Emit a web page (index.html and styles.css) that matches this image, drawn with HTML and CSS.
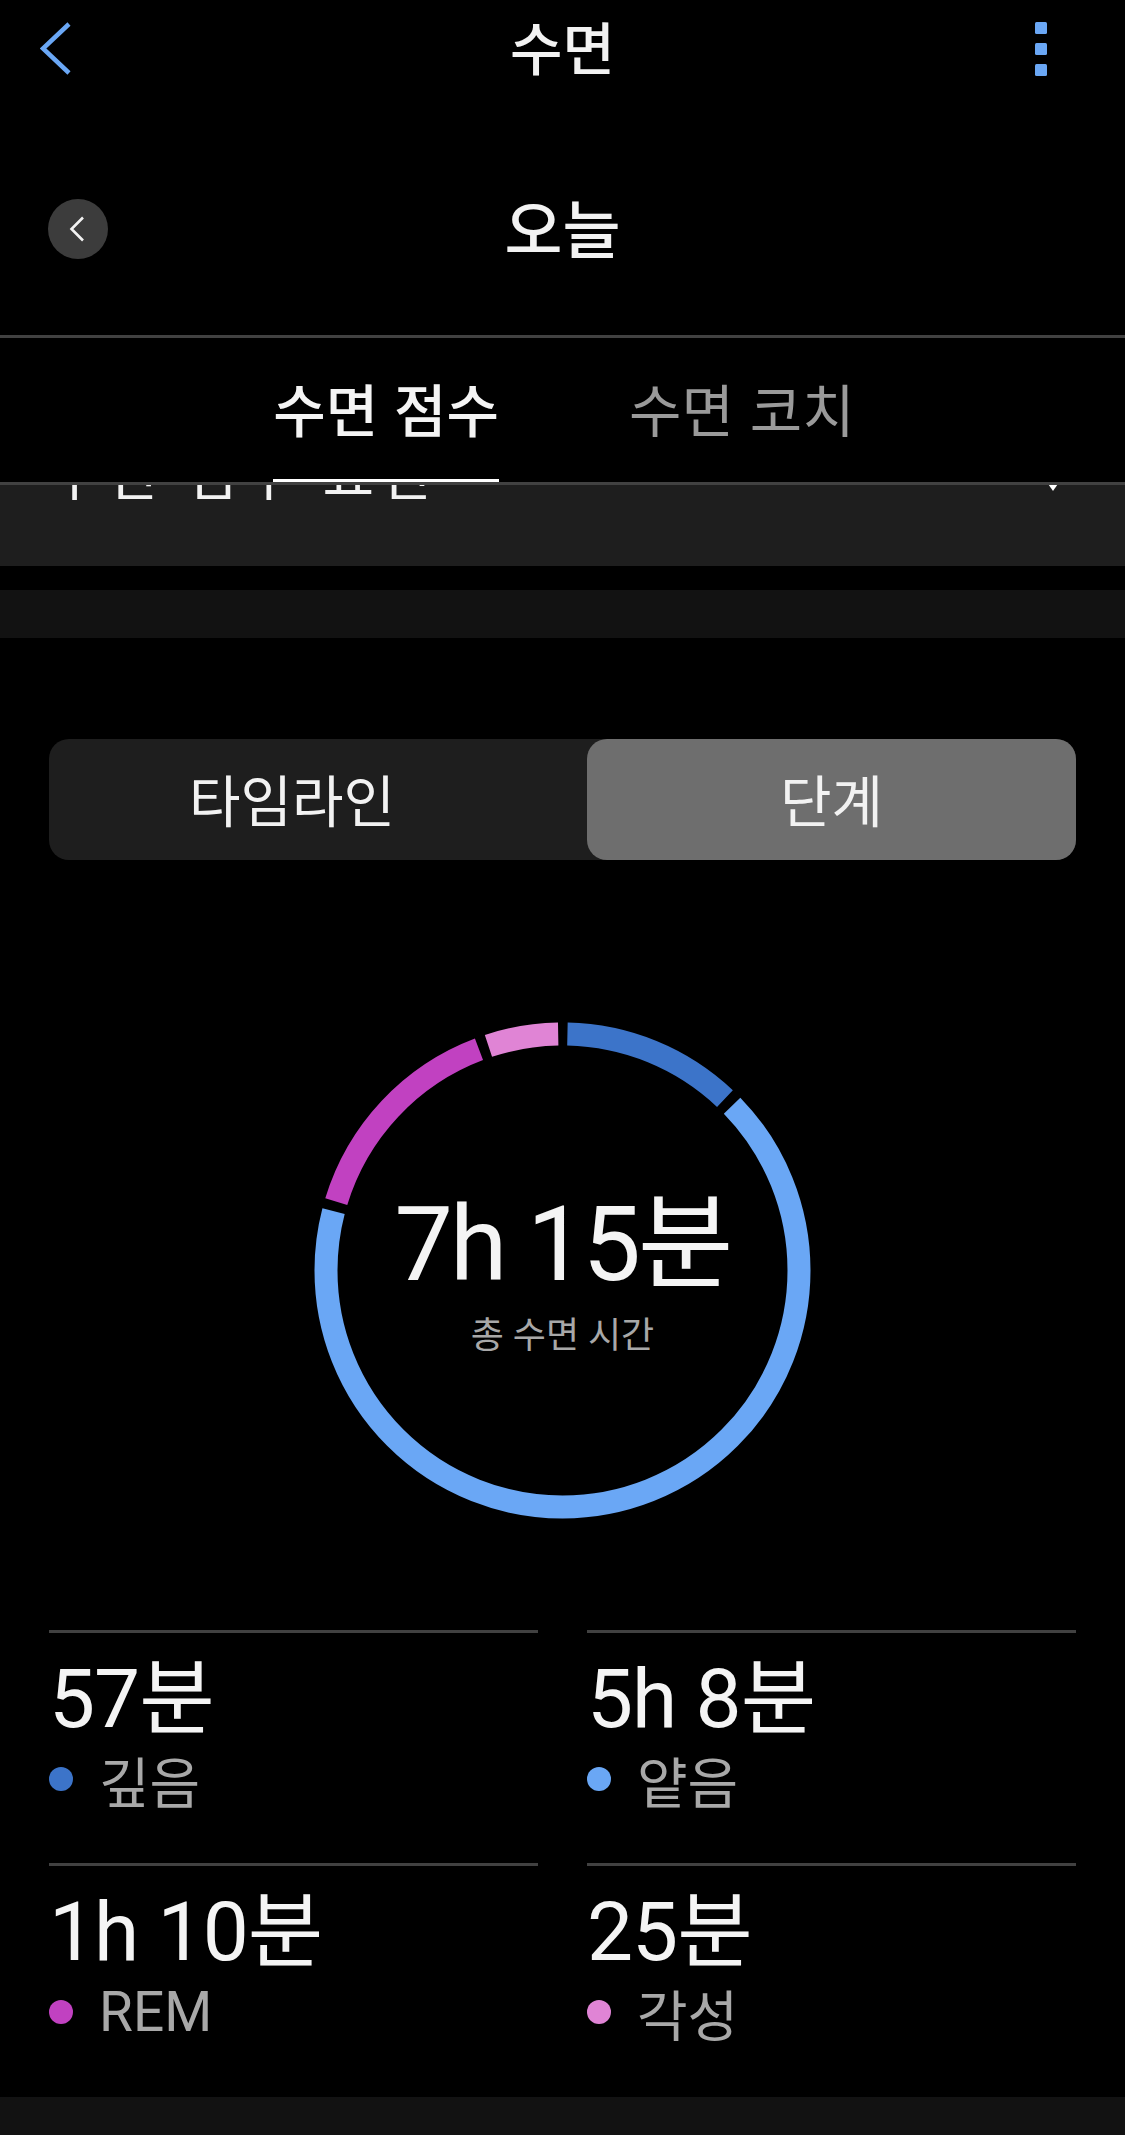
FILE: index.html
```html
<!DOCTYPE html>
<html lang="ko">
<head>
    <meta charset="UTF-8">
    <meta name="viewport" content="width=device-width, initial-scale=1.0">
    <title>수면</title>
    <link rel="stylesheet" href="styles.css">
</head>
<body>

    <!-- Top bar -->
    <header class="topbar">
        <div class="topbar-left">
            <svg class="back-icon" width="32" height="54" viewBox="0 0 32 54">
                <polyline points="29,2 3,26.5 29,51" fill="none" stroke="#6aa7f5" stroke-width="4.5"/>
            </svg>
        </div>
        <h1 class="title">수면</h1>
        <div class="topbar-right">
            <svg class="more-icon" width="12" height="54" viewBox="0 0 12 54">
                <rect x="0" y="0" width="12" height="12" rx="1.5" fill="#6aa7f5"/>
                <rect x="0" y="21" width="12" height="12" rx="1.5" fill="#6aa7f5"/>
                <rect x="0" y="42" width="12" height="12" rx="1.5" fill="#6aa7f5"/>
            </svg>
        </div>
    </header>

    <!-- Date selector -->
    <div class="datebar">
        <div class="datebar-left">
            <div class="prev-day">
                <svg width="16" height="26" viewBox="0 0 16 26">
                    <polyline points="14,1.5 2.5,13 14,24.5" fill="none" stroke="#f2f2f2" stroke-width="2.6"/>
                </svg>
            </div>
        </div>
        <div class="date">오늘</div>
        <div></div>
    </div>

    <!-- Tabs -->
    <nav class="tabs">
        <div class="tab active">수면 점수</div>
        <div class="tab">수면 코치</div>
    </nav>

    <!-- Collapsed card under the sticky header -->
    <div class="factors">
        <div class="factors-row">
            <span>수면 점수 요인</span>
            <span class="caret"></span>
        </div>
    </div>
    <div class="strip"></div>

    <!-- Timeline / stages switch -->
    <div class="switch">
        <div class="switch-item">타임라인</div>
        <div class="switch-item selected">단계</div>
    </div>

    <!-- Stages ring -->
    <div class="ring">
        <svg width="497" height="497" viewBox="0 0 497 497">
            <g transform="rotate(-90 248.5 248.5)" fill="none" stroke-width="23">
                <!-- circumference 1486, gaps of 10 -->
                <circle cx="248.5" cy="248.5" r="236.5" stroke="#3c74c9" stroke-dasharray="174 1486" stroke-dashoffset="-5"/>
                <circle cx="248.5" cy="248.5" r="236.5" stroke="#6aa7f5" stroke-dasharray="985 1486" stroke-dashoffset="-189"/>
                <circle cx="248.5" cy="248.5" r="236.5" stroke="#c141c1" stroke-dasharray="216 1486" stroke-dashoffset="-1184"/>
                <circle cx="248.5" cy="248.5" r="236.5" stroke="#e084d5" stroke-dasharray="71 1486" stroke-dashoffset="-1410"/>
            </g>
        </svg>
        <div class="ring-label">
            <div class="total">7h 15분</div>
            <div class="total-caption">총 수면 시간</div>
        </div>
    </div>

    <!-- Stage totals -->
    <div class="stats">
        <div class="stat">
            <div class="stat-value">57분</div>
            <div class="stat-label"><span class="dot deep"></span>깊음</div>
        </div>
        <div class="stat">
            <div class="stat-value">5h 8분</div>
            <div class="stat-label"><span class="dot light"></span>얕음</div>
        </div>
        <div class="stat">
            <div class="stat-value">1h 10분</div>
            <div class="stat-label"><span class="dot rem"></span>REM</div>
        </div>
        <div class="stat">
            <div class="stat-value">25분</div>
            <div class="stat-label"><span class="dot awake"></span>각성</div>
        </div>
    </div>

    <div class="footer-strip"></div>

</body>
</html>
```
FILE: styles.css
```css
/* Page */
body {
    margin: 0;
    background-color: #000;
    color: #f2f2f2;
    font-family: Roboto, "Noto Sans CJK KR", sans-serif;
    overflow: hidden;
}

/* Top bar */
.topbar {
    display: grid;
    grid-template-columns: 1fr auto 1fr;
    align-items: center;
    height: 97px;
}

.topbar-left {
    padding-left: 40px;
    display: flex;
}

.topbar-right {
    display: flex;
    justify-content: flex-end;
    padding-right: 78px;
}

.title {
    margin: -7px 0 0;
    font-family: "Noto Sans CJK KR", sans-serif;
    font-size: 57px;
    font-weight: 500;
    line-height: 70px;
}

/* Date selector */
.datebar {
    display: grid;
    grid-template-columns: 1fr auto 1fr;
    align-items: center;
    height: 60px;
    padding: 100px 0 78px;
}

.datebar-left {
    padding-left: 48px;
}

.prev-day {
    width: 60px;
    height: 60px;
    border-radius: 50%;
    background-color: #3c3c3c;
    display: flex;
    align-items: center;
    justify-content: center;
}

.prev-day svg {
    margin-left: -2px;
}

.date {
    margin-top: -6px;
    font-family: "Noto Sans CJK KR", sans-serif;
    font-size: 63px;
    font-weight: 500;
    line-height: 70px;
}

/* Tabs */
.tabs {
    display: flex;
    justify-content: center;
    gap: 130px;
    height: 144px;
    border-top: 3px solid #414141;
    border-bottom: 3px solid #414141;
    padding-left: 3px;
}

.tab {
    display: flex;
    align-items: center;
    padding-bottom: 4px;
    font-family: "Noto Sans CJK KR", sans-serif;
    font-size: 57px;
    color: #9a9a9a;
    border-bottom: 3px solid transparent;
}

.tab.active {
    color: #f4f4f4;
    font-weight: 500;
    border-bottom-color: #fff;
}

/* Card that slid under the header */
.factors {
    height: 81px;
    background-color: #1e1e1e;
    overflow: hidden;
}

.factors-row {
    display: flex;
    justify-content: space-between;
    margin-top: -44px;
    padding: 0 65px 0 49px;
    font-family: "Noto Sans CJK KR", sans-serif;
    font-size: 56px;
    line-height: 60px;
    letter-spacing: 6px;
}

.caret {
    margin-top: 40px;
    width: 0;
    height: 0;
    border-left: 7px solid transparent;
    border-right: 7px solid transparent;
    border-top: 10px solid #fff;
}

.strip {
    margin-top: 24px;
    height: 48px;
    background-color: #121212;
}

/* Timeline / stages switch */
.switch {
    display: grid;
    grid-template-columns: 538px 1fr;
    height: 121px;
    margin: 101px 49px 0;
    background-color: #1e1e1e;
    border-radius: 20px;
}

.switch-item {
    display: flex;
    align-items: center;
    justify-content: center;
    padding-right: 52px;
    padding-bottom: 4px;
    font-family: "Noto Sans CJK KR", sans-serif;
    font-size: 56px;
    color: #f2f2f2;
}

.switch-item.selected {
    padding-right: 0;
    background-color: #6e6e6e;
    border-radius: 20px;
}

/* Ring */
.ring {
    position: relative;
    width: 497px;
    height: 497px;
    margin: 162px auto 0;
}

.ring svg {
    display: block;
}

.ring-label {
    position: absolute;
    top: 0;
    left: 0;
    right: 0;
    padding-top: 168px;
    text-align: center;
}

.total {
    font-size: 104px;
    line-height: 110px;
    letter-spacing: -3px;
    color: #f4f4f4;
}

.total-caption {
    margin-top: 13px;
    font-size: 36px;
    line-height: 46px;
    color: #a8a8a8;
}

/* Stage totals */
.stats {
    display: grid;
    grid-template-columns: 1fr 1fr;
    column-gap: 49px;
    row-gap: 49px;
    margin: 111px 49px 0;
}

.stat {
    border-top: 3px solid #414141;
    padding-top: 21px;
}

.stat-value {
    font-size: 82px;
    line-height: 90px;
    letter-spacing: -1px;
    color: #f4f4f4;
}

.stat-label {
    display: flex;
    align-items: center;
    height: 70px;
    font-size: 55px;
    color: #a8a8a8;
}

.dot {
    width: 24px;
    height: 24px;
    border-radius: 50%;
    margin-right: 26px;
}

.dot.deep { background-color: #3c74c9; }
.dot.light { background-color: #6aa7f5; }
.dot.rem { background-color: #c141c1; }
.dot.awake { background-color: #e084d5; }

.footer-strip {
    margin-top: 50px;
    height: 60px;
    background-color: #121212;
}
```
